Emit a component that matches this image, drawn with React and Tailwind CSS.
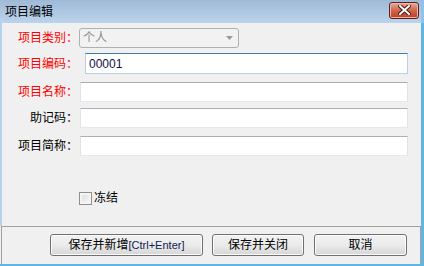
import React from 'react';

const font = { fontFamily: '"Liberation Sans", "Noto Sans CJK SC", sans-serif' };

const Field = ({ label, required, children, className = '' }) => (
  <div className={`flex items-center ${className}`}>
    <div className={`w-[76px] text-right text-[12px] leading-none pr-0 ${required ? 'text-[#ff0000]' : 'text-black'}`}>
      {label}：
    </div>
    {children}
  </div>
);

const TextBox = ({ value, focused, className = '' }) => (
  <div
    className={`h-[20px] flex-none bg-white border text-[12px] flex items-center pl-[3px] text-[#10104a] ${
      focused
        ? 'border-[#b6d0e8] border-t-[#3d7bad]'
        : 'border-[#e2e3ea] border-t-[#abadb3] border-b-[#e3e9ef]'
    } ${className}`}
  >
    {value}
  </div>
);

const Button = ({ children, className = '' }) => (
  <button
    className={`h-[22px] rounded-[3px] border border-[#707070] bg-gradient-to-b from-[#f2f2f2] via-[#ebebeb] to-[#d6d6d6] text-[12px] text-black leading-none shadow-[inset_0_0_0_1px_#fcfcfc] ${className}`}
  >
    {children}
  </button>
);

export default function App() {
  return (
    <div className="w-[424px] h-[266px] flex flex-col bg-[#f0f0f0] select-none" style={font}>
      {/* title bar */}
      <div className="h-[23px] flex-none flex items-center justify-between bg-gradient-to-b from-[#9fbad7] to-[#bcd3ec] border-r-[3px] border-r-[#8fc4ea]">
        <span className="pl-[5px] text-[12px] text-black">项目编辑</span>
        <div className="mr-[2px] mt-[-3px] w-[30px] h-[17px] rounded-[3px] border border-[#5a2320] bg-gradient-to-b from-[#e8a898] via-[#d0644c] to-[#c23c22] flex items-center justify-center shadow-[inset_0_0_0_1px_#eeb4a6]">
          <svg width="13" height="10" viewBox="0 0 13 10">
            <path d="M2 1 L11 9 M11 1 L2 9" stroke="#4a1a14" strokeWidth="4" strokeLinecap="square" />
            <path d="M2 1 L11 9 M11 1 L2 9" stroke="#ffffff" strokeWidth="2" strokeLinecap="square" />
          </svg>
        </div>
      </div>

      {/* body */}
      <div className="flex-1 flex flex-col border-r-[3px] border-r-[#5db6e4] border-b-2 border-b-[#5db6e4]">
        <div className="flex-1 flex flex-col border-l-2 border-l-[#b5d1ef]">
          <Field label="项目类别" required className="mt-[5px] h-[20px]">
            <div className="ml-[1px] w-[160px] h-[20px] rounded-[3px] border border-[#b0b0b0] bg-[#f2f2f2] flex items-center justify-between pl-[3px] pr-[5px] text-[12px] text-[#8a8a8a]">
              <span>个人</span>
              <svg width="7" height="4" viewBox="0 0 7 4">
                <path d="M0 0 H7 L3.5 4 Z" fill="#9a9a9a" />
              </svg>
            </div>
          </Field>

          <Field label="项目编码" required className="mt-[5px] h-[21px]">
            <TextBox value="00001" focused className="ml-[7px] w-[323px] h-[21px]" />
          </Field>

          <Field label="项目名称" required className="mt-[8px]">
            <TextBox className="ml-[2px] w-[328px]" />
          </Field>

          <Field label="助记码" className="mt-[6px]">
            <TextBox className="ml-[2px] w-[328px]" />
          </Field>

          <Field label="项目简称" className="mt-[8px]">
            <TextBox className="ml-[2px] w-[328px]" />
          </Field>

          <label className="mt-[33px] ml-[77px] flex items-center gap-[2px] text-[12px] text-black">
            <span className="w-[13px] h-[13px] border border-[#8e8f8f] bg-gradient-to-br from-[#dcdcdc] to-[#f8f8f8] shadow-[inset_0_0_0_2px_#f4f4f4]" />
            冻结
          </label>
        </div>

        {/* buttons panel */}
        <div className="h-[38px] flex-none flex items-start pt-[7px] border-t border-t-[#a0a0a0] border-l border-l-[#a0a0a0] border-r border-r-[#a0a0a0] ml-[1px]">
          <Button className="ml-[48px] w-[153px]">
            保存并新增<span className="text-[11px] text-[#102050]">[Ctrl+Enter]</span>
          </Button>
          <Button className="ml-[9px] w-[92px]">保存并关闭</Button>
          <Button className="ml-[10px] w-[93px]">取消</Button>
        </div>
      </div>
    </div>
  );
}
